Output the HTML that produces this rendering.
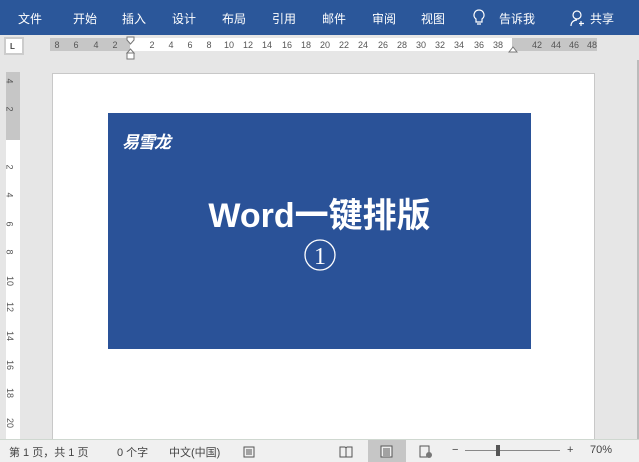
<!DOCTYPE html>
<html><head><meta charset="utf-8"><style>
*{margin:0;padding:0;box-sizing:border-box}
body{width:639px;height:462px;overflow:hidden;background:#e6e6e6;font-family:"Liberation Sans","Noto Sans CJK SC",sans-serif;position:relative}
.a{position:absolute}
.top{left:0;top:0;width:639px;height:35px;background:#2b579a;color:#fff;font-size:12px}
.top span{position:absolute;top:10px}
.rn{position:absolute;top:40px;font-size:9px;color:#555;transform:translateX(-50%)}
.vn{position:absolute;left:7px;font-size:9px;color:#555;transform:rotate(90deg);transform-origin:center}
.st{left:0;top:439px;width:639px;height:23px;background:#f0f0f0;border-top:1px solid #cfd8d0;font-size:11px;color:#444}
.st span{position:absolute;top:4px}
</style></head><body>
<div class="a top">
<span style="left:18px">文件</span><span style="left:73px">开始</span><span style="left:122px">插入</span><span style="left:172px">设计</span><span style="left:222px">布局</span><span style="left:272px">引用</span><span style="left:322px">邮件</span><span style="left:372px">审阅</span><span style="left:421px">视图</span>
<svg class="a" style="left:472px;top:9px" width="14" height="18" viewBox="0 0 14 18"><path d="M7 1a5 5 0 0 0-3 9v3h6v-3a5 5 0 0 0-3-9zM5 15h4" fill="none" stroke="#fff" stroke-width="1.2"/></svg>
<span style="left:499px">告诉我</span>
<svg class="a" style="left:570px;top:9px" width="16" height="18" viewBox="0 0 16 18"><circle cx="7" cy="6" r="4" fill="none" stroke="#fff" stroke-width="1.2"/><path d="M1 17c0-4 3-6 6-6M11 12v5M9 14.5h5" fill="none" stroke="#fff" stroke-width="1.2"/></svg>
<span style="left:590px">共享</span>
</div>
<div class="a" style="left:4px;top:37px;width:20px;height:18px;background:#fff;border:2px solid #ccc;font-size:8px;padding:3px 0 0 4px;font-weight:bold;color:#444">L</div>
<div class="a" style="left:50px;top:38px;width:80px;height:13px;background:#c6c6c6"></div>
<div class="a" style="left:130px;top:38px;width:382px;height:13px;background:#fff"></div>
<div class="a" style="left:512px;top:38px;width:85px;height:13px;background:#c6c6c6"></div>
<svg class="a" style="left:126px;top:36px" width="10" height="26"><path d="M1 1h7v3l-3.5 4L1 4z M1 17l3.5-4 3.5 4z M1 17h7v6H1z" fill="#fff" stroke="#777"/></svg>
<svg class="a" style="left:508px;top:44px" width="10" height="10"><path d="M1 8l4-5 4 5z" fill="#fff" stroke="#777"/></svg>
<span class="rn" style="left:57px">8</span><span class="rn" style="left:76px">6</span><span class="rn" style="left:96px">4</span><span class="rn" style="left:115px">2</span>
<span class="rn" style="left:152px">2</span><span class="rn" style="left:171px">4</span><span class="rn" style="left:190px">6</span><span class="rn" style="left:209px">8</span><span class="rn" style="left:229px">10</span><span class="rn" style="left:248px">12</span><span class="rn" style="left:267px">14</span><span class="rn" style="left:287px">16</span><span class="rn" style="left:306px">18</span><span class="rn" style="left:325px">20</span><span class="rn" style="left:344px">22</span><span class="rn" style="left:363px">24</span><span class="rn" style="left:383px">26</span><span class="rn" style="left:402px">28</span><span class="rn" style="left:421px">30</span><span class="rn" style="left:440px">32</span><span class="rn" style="left:459px">34</span><span class="rn" style="left:479px">36</span><span class="rn" style="left:498px">38</span>
<span class="rn" style="left:537px">42</span><span class="rn" style="left:556px">44</span><span class="rn" style="left:574px">46</span><span class="rn" style="left:592px">48</span>
<div class="a" style="left:6px;top:72px;width:14px;height:68px;background:#c6c6c6"></div>
<div class="a" style="left:6px;top:140px;width:14px;height:300px;background:#fff"></div>
<span class="vn" style="top:76px">4</span><span class="vn" style="top:104px">2</span><span class="vn" style="top:162px">2</span><span class="vn" style="top:190px">4</span><span class="vn" style="top:219px">6</span><span class="vn" style="top:247px">8</span><span class="vn" style="top:276px;left:5px">10</span><span class="vn" style="top:302px;left:5px">12</span><span class="vn" style="top:331px;left:5px">14</span><span class="vn" style="top:360px;left:5px">16</span><span class="vn" style="top:388px;left:5px">18</span><span class="vn" style="top:418px;left:5px">20</span>
<div class="a" style="left:52px;top:73px;width:543px;height:370px;background:#fff;border:1px solid #c8c8c8;border-bottom:none"></div>
<div class="a" style="left:637px;top:60px;width:2px;height:380px;background:#bbb"></div>
<div class="a" style="left:108px;top:113px;width:423px;height:236px;background:#2a5298"></div>
<div class="a" style="left:122px;top:128px;color:#fff;font-size:17px;font-weight:bold;font-style:italic;letter-spacing:-1px">易雪龙</div>
<div class="a" style="left:108px;top:188px;width:423px;text-align:center;color:#fff;font-size:34px;font-weight:bold">Word一键排版</div>
<svg class="a" style="left:303px;top:238px" width="34" height="34"><circle cx="17" cy="17" r="15" fill="none" stroke="#fff" stroke-width="1.3"/><text x="17" y="26" text-anchor="middle" fill="#fff" font-family="Liberation Serif,serif" font-size="24">1</text></svg>
<div class="a st">
<span style="left:9px">第 1 页，共 1 页</span><span style="left:117px">0 个字</span><span style="left:169px">中文(中国)</span>
<svg class="a" style="left:243px;top:5px" width="12" height="13"><rect x="1" y="2" width="10" height="10" fill="none" stroke="#555"/><path d="M3 5h6M3 7h6M3 9h6" stroke="#555"/></svg>
<svg class="a" style="left:339px;top:5px" width="14" height="13"><path d="M1 2h5l1 1 1-1h5v10H1z M7 3v9" fill="none" stroke="#555"/></svg>
<div class="a" style="left:368px;top:0;width:38px;height:22px;background:#c6c6c6"></div>
<svg class="a" style="left:380px;top:5px" width="13" height="13"><rect x="1" y="1" width="11" height="11" fill="#eee" stroke="#555"/><path d="M3 4h7M3 6h7M3 8h7M3 10h7" stroke="#555"/></svg>
<svg class="a" style="left:419px;top:5px" width="14" height="13"><rect x="1" y="1" width="9" height="11" fill="none" stroke="#555"/><circle cx="10" cy="10" r="3" fill="#777"/></svg>
<span style="left:452px">−</span>
<div class="a" style="left:465px;top:10px;width:95px;height:1px;background:#888"></div>
<div class="a" style="left:496px;top:5px;width:4px;height:11px;background:#555"></div>
<span style="left:567px">+</span><span style="left:590px">70%</span>
</div>
</body></html>
